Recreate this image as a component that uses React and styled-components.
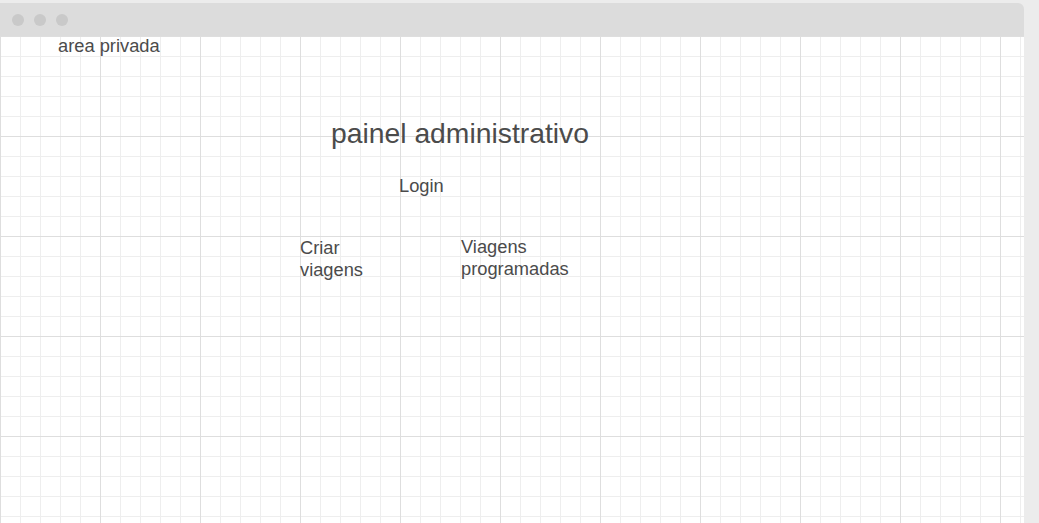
import React from 'react';
import styled, { createGlobalStyle } from 'styled-components';

const GlobalStyle = createGlobalStyle`
  html, body {
    margin: 0;
    padding: 0;
    background: #ececec;
    font-family: "Liberation Sans", Arial, sans-serif;
    overflow: hidden;
  }
`;

const Page = styled.div`
  width: 1039px;
  height: 523px;
  padding-top: 3px;
  box-sizing: border-box;
`;

const Window = styled.div`
  width: 1024px;
  height: 520px;
  display: flex;
  flex-direction: column;
  border-top-right-radius: 6px;
  overflow: hidden;
`;

const TitleBar = styled.div`
  height: 33px;
  flex: none;
  background: #dcdcdc;
  display: flex;
  align-items: center;
  gap: 10px;
  padding-left: 12px;
`;

const Dot = styled.span`
  width: 12px;
  height: 12px;
  border-radius: 50%;
  background: #c9c9c9;
`;

const Canvas = styled.div`
  position: relative;
  flex: 1;
  background-color: #ffffff;
  background-image:
    linear-gradient(to right, #dedede 1px, transparent 1px),
    linear-gradient(to bottom, #dedede 1px, transparent 1px),
    linear-gradient(to right, #eeeeee 1px, transparent 1px),
    linear-gradient(to bottom, #eeeeee 1px, transparent 1px);
  background-size: 100px 100px, 100px 100px, 20px 20px, 20px 20px;
  background-position: 0 0;
`;

const Label = styled.div`
  position: absolute;
  left: ${(p) => p.$x}px;
  top: ${(p) => p.$y}px;
  width: ${(p) => (p.$w ? `${p.$w}px` : 'auto')};
  white-space: ${(p) => (p.$w ? 'normal' : 'nowrap')};
  color: #4b4b4b;
  font-size: ${(p) => p.$size || 18.3}px;
  line-height: ${(p) => (p.$size ? 1.2 : '22px')};
`;

const nodes = [
  { text: 'area privada', x: 58, y: -1 },
  { text: 'painel administrativo', x: 331, y: 81, size: 28.3 },
  { text: 'Login', x: 399, y: 139 },
  { text: 'Criar viagens', x: 300, y: 201, w: 80 },
  { text: 'Viagens programadas', x: 461, y: 200, w: 120 },
];

export default function App() {
  return (
    <Page>
      <GlobalStyle />
      <Window>
        <TitleBar>
          <Dot />
          <Dot />
          <Dot />
        </TitleBar>
        <Canvas>
          {nodes.map((n) => (
            <Label key={n.text} $x={n.x} $y={n.y} $w={n.w} $size={n.size}>
              {n.text}
            </Label>
          ))}
        </Canvas>
      </Window>
    </Page>
  );
}
